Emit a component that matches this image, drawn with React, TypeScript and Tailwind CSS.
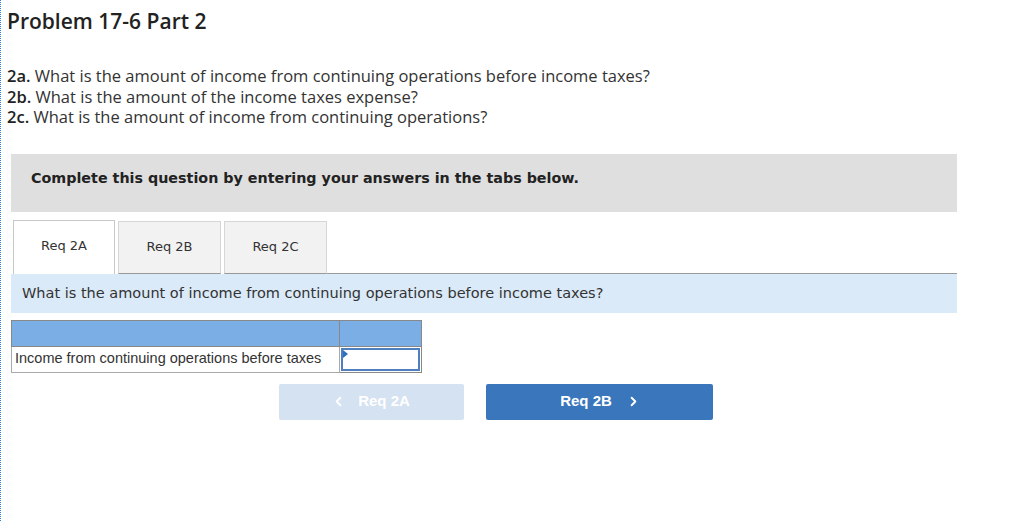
import { ChevronLeft, ChevronRight } from 'lucide-react';

const tabs = ['Req 2A', 'Req 2B', 'Req 2C'];

export default function App() {
  return (
    <div className="min-h-[521px] w-[1024px] bg-white border-l border-dotted border-[#2a7ad6] text-[#222]">
      <div className="pl-[6px] pt-[9px]">
        <h1 className="font-['Open_Sans',sans-serif] text-[21px] font-semibold leading-6 text-[#222]">
          Problem 17-6 Part 2
        </h1>

        <div className="mt-[33px] font-['Open_Sans',sans-serif] text-[16.5px] leading-[20.5px] text-[#333]">
          <p><b className="font-semibold text-[#222]">2a.</b> What is the amount of income from continuing operations before income taxes?</p>
          <p><b className="font-semibold text-[#222]">2b.</b> What is the amount of the income taxes expense?</p>
          <p><b className="font-semibold text-[#222]">2c.</b> What is the amount of income from continuing operations?</p>
        </div>
      </div>

      <div className="ml-[10px] mt-[26px] w-[946px] font-['DejaVu_Sans',sans-serif]">
        <div className="h-[58px] bg-[#dfdfdf] pl-5 pt-[14px]">
          <p className="text-[14.3px] font-bold text-[#222]">
            Complete this question by entering your answers in the tabs below.
          </p>
        </div>

        <div className="mt-2 flex items-end">
          {tabs.map((t, i) => (
            <div
              key={t}
              className={
                i === 0
                  ? 'ml-[2px] flex h-[54px] w-[102px] items-center justify-center border border-b-0 border-[#c8c8c8] bg-white pb-[2px] text-[13px] text-[#333]'
                  : 'ml-[3px] flex h-[53px] w-[103px] items-center justify-center border border-[#d6d6d6] border-b-[#999] bg-[#f2f2f2] text-[13px] text-[#333]'
              }
            >
              {t}
            </div>
          ))}
          <div className="flex-1 border-b border-[#999]" />
        </div>

        <div className="flex h-[39px] items-center bg-[#dbeaf8] pl-[11px] pt-[2px]">
          <p className="text-[14.5px] text-[#333]">
            What is the amount of income from continuing operations before income taxes?
          </p>
        </div>

        <table className="mt-[7px] border-collapse font-['Liberation_Sans',sans-serif] text-[14.5px] text-[#333]">
          <tbody>
            <tr className="h-[26px] bg-[#7aaee4]">
              <td className="w-[328px] border border-[#888]" />
              <td className="w-[82px] border border-[#888]" />
            </tr>
            <tr className="h-[26px]">
              <td className="border border-[#aaa] pl-[3px]">Income from continuing operations before taxes</td>
              <td className="border border-[#888] p-0">
                <div className="relative mx-[1px] h-[23px] border-2 border-[#4f7fbf] bg-white">
                  <div className="absolute left-0 top-0 h-0 w-0 border-y-[4px] border-l-[5px] border-y-transparent border-l-[#2f6fc0]" />
                </div>
              </td>
            </tr>
          </tbody>
        </table>

        <div className="mt-[11px] flex font-['Liberation_Sans',sans-serif] text-[15px] font-bold text-white">
          <button className="ml-[268px] flex h-[36px] w-[185px] items-center justify-center gap-[12px] rounded-[2px] bg-[#d5e2f1] text-white">
            <ChevronLeft size={15} strokeWidth={3} />
            <span className="mr-[2px]">Req 2A</span>
          </button>
          <button className="ml-[22px] flex h-[36px] w-[227px] items-center justify-center gap-[14px] rounded-[2px] bg-[#3a76bb] text-white">
            <span className="ml-[2px]">Req 2B</span>
            <ChevronRight size={15} strokeWidth={3} />
          </button>
        </div>
      </div>
    </div>
  );
}
